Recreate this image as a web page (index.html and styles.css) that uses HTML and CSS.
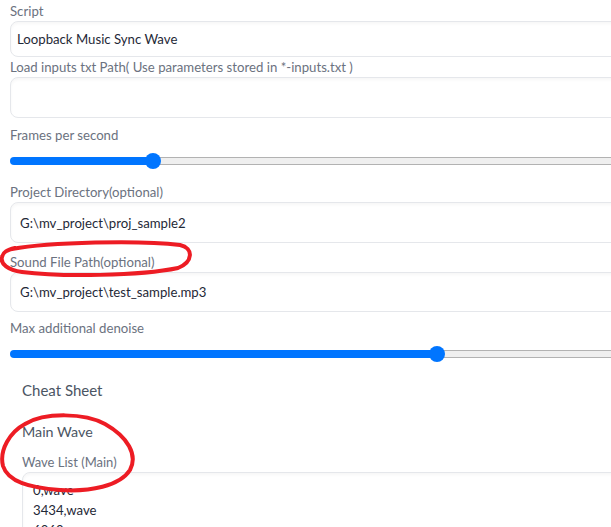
FILE: index.html
```html
<!DOCTYPE html>
<html>
<head>
<meta charset="utf-8">
<link rel="stylesheet" href="styles.css">
</head>
<body>
<div class="page">
  <div class="field f1">
    <div class="label">Script</div>
    <div class="box dropdown">Loopback Music Sync Wave</div>
  </div>
  <div class="field f2">
    <div class="label">Load inputs txt Path( Use parameters stored in *-inputs.txt )</div>
    <div class="box text empty"></div>
  </div>
  <div class="field s1">
    <div class="label">Frames per second</div>
    <div class="slider">
      <div class="fill" style="width:143px"></div>
      <div class="thumb"></div>
      <div class="rest"></div>
    </div>
  </div>
  <div class="field f4">
    <div class="label">Project Directory(optional)</div>
    <div class="box text">G:\mv_project\proj_sample2</div>
  </div>
  <div class="field f5">
    <div class="label">Sound File Path(optional)</div>
    <div class="box text short">G:\mv_project\test_sample.mp3</div>
  </div>
  <div class="field s2">
    <div class="label">Max additional denoise</div>
    <div class="slider">
      <div class="fill" style="width:427px"></div>
      <div class="thumb"></div>
      <div class="rest"></div>
    </div>
  </div>
  <div class="accordion">
    <div class="acc-title">Cheat Sheet</div>
    <div class="acc-title sub">Main Wave</div>
    <div class="label small">Wave List (Main)</div>
    <div class="box area">
      <div>0,wave</div>
      <div>3434,wave</div>
      <div>6060,wave</div>
      <div>8686,wave</div>
    </div>
  </div>
</div>
<svg class="marks" width="611" height="527" viewBox="0 0 611 527">
  <path d="M 12,249 C 50,242 140,240 180,245 C 194,248 193,262 178,268 C 140,276 60,277 22,272 C 8,270 0,264 2,257 C 3,252 7,250 15,248" />
  <path d="M 25,424 C 45,412 85,413 105,424 C 128,437 138,455 130,470 C 120,486 90,492 60,490 C 30,488 8,482 3,466 C -1,450 10,432 25,424 Z" />
</svg>
</body>
</html>
```
FILE: styles.css
```css
html, body {
  margin: 0;
  padding: 0;
  overflow: hidden;
  background: #ffffff;
  width: 611px;
  height: 527px;
}
body {
  position: relative;
  font-family: "Lato", "Noto Sans", sans-serif;
}
.page {
  width: 700px;
  padding-left: 10px;
  padding-top: 1px;
}
.label {
  height: 20px;
  line-height: 20px;
  font-size: 13.2px;
  color: #6b7280;
  white-space: nowrap;
}
.box {
  box-sizing: border-box;
  border: 1px solid #e5e7eb;
  border-radius: 8px;
  background: #ffffff;
  box-shadow: inset 0 2px 3px rgba(0, 0, 0, 0.035);
  font-size: 13.2px;
  color: #1f2937;
  display: flex;
  align-items: center;
  white-space: nowrap;
}
.dropdown {
  height: 36px;
  padding-left: 6px;
}
.text {
  height: 41px;
  padding-left: 9px;
}
.text.short {
  height: 40px;
}
.s1 { margin-top: 7px; }
.f4 { margin-top: 5px; }
.f5 { margin-top: 9px; }
.s2 { margin-top: 6px; }
.slider {
  height: 32px;
  display: flex;
  align-items: center;
}
.fill {
  height: 8px;
  background: #0075ff;
  border-radius: 4px 0 0 4px;
  flex: none;
}
.thumb {
  width: 16px;
  height: 16px;
  border-radius: 50%;
  background: #0075ff;
  margin: 0 -8px;
  flex: none;
  position: relative;
  z-index: 1;
}
.rest {
  flex: 1;
  height: 8px;
  box-sizing: border-box;
  background: #efefef;
  border-top: 1px solid #b2b2b2;
  border-bottom: 1px solid #b2b2b2;
}
.accordion {
  margin-top: 10px;
  padding-left: 12px;
}
.acc-title {
  height: 20px;
  line-height: 20px;
  font-size: 15px;
  color: #4b5563;
}
.acc-title.sub {
  margin-top: 22px;
  font-size: 14.3px;
}
.label.small {
  margin-top: 10px;
  font-size: 13px;
}
.area {
  display: block;
  padding: 7px 10px;
  line-height: 20px;
  height: 120px;
}
.marks {
  position: absolute;
  left: 0;
  top: 0;
  pointer-events: none;
}
.marks path {
  fill: none;
  stroke: #ed1c24;
  stroke-width: 4;
  stroke-linecap: round;
  stroke-linejoin: round;
}
```
